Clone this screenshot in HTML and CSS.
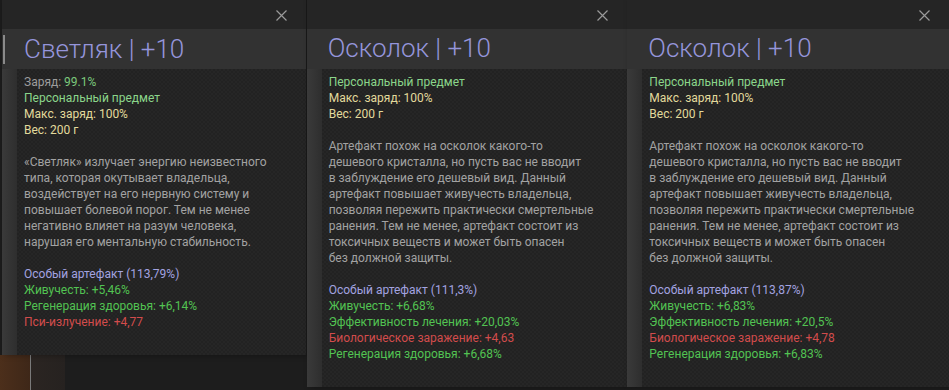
FILE: index.html
```html
<!DOCTYPE html>
<html lang="ru">
<head>
    <meta charset="UTF-8">
    <title>Артефакты</title>
    <link rel="stylesheet" href="styles.css">
</head>
<body>
    <div class="screen">
        <!-- Светляк -->
        <div class="tip tip-short">
            <div class="tip-top">
                <svg class="close" width="11" height="11" viewBox="0 0 11 11"><path d="M0.5 0.5L10.5 10.5M10.5 0.5L0.5 10.5"/></svg>
            </div>
            <div class="tip-title active"><span>Светляк | +10</span></div>
            <div class="tip-body">
                <div class="block">
                    <div><span class="muted">Заряд:</span> <span class="charge">99.1%</span></div>
                    <div class="personal">Персональный предмет</div>
                    <div class="prop">Макс. заряд: 100%</div>
                    <div class="prop">Вес: 200 г</div>
                </div>
                <div class="block desc">
                    «Светляк» излучает энергию неизвестного<br>
                    типа, которая окутывает владельца,<br>
                    воздействует на его нервную систему и<br>
                    повышает болевой порог. Тем не менее<br>
                    негативно влияет на разум человека,<br>
                    нарушая его ментальную стабильность.
                </div>
                <div class="block">
                    <div class="special">Особый артефакт (113,79%)</div>
                    <div class="good">Живучесть: +5,46%</div>
                    <div class="good">Регенерация здоровья: +6,14%</div>
                    <div class="bad">Пси-излучение: +4,77</div>
                </div>
            </div>
        </div>

        <!-- Осколок -->
        <div class="tip">
            <div class="tip-top">
                <svg class="close" width="11" height="11" viewBox="0 0 11 11"><path d="M0.5 0.5L10.5 10.5M10.5 0.5L0.5 10.5"/></svg>
            </div>
            <div class="tip-title"><span>Осколок | +10</span></div>
            <div class="tip-body">
                <div class="block">
                    <div class="personal">Персональный предмет</div>
                    <div class="prop">Макс. заряд: 100%</div>
                    <div class="prop">Вес: 200 г</div>
                </div>
                <div class="block desc">
                    Артефакт похож на осколок какого-то<br>
                    дешевого кристалла, но пусть вас не вводит<br>
                    в заблуждение его дешевый вид. Данный<br>
                    артефакт повышает живучесть владельца,<br>
                    позволяя пережить практически смертельные<br>
                    ранения. Тем не менее, артефакт состоит из<br>
                    токсичных веществ и может быть опасен<br>
                    без должной защиты.
                </div>
                <div class="block">
                    <div class="special">Особый артефакт (111,3%)</div>
                    <div class="good">Живучесть: +6,68%</div>
                    <div class="good">Эффективность лечения: +20,03%</div>
                    <div class="bad">Биологическое заражение: +4,63</div>
                    <div class="good">Регенерация здоровья: +6,68%</div>
                </div>
            </div>
        </div>

        <!-- Осколок, второй -->
        <div class="tip">
            <div class="tip-top">
                <svg class="close" width="11" height="11" viewBox="0 0 11 11"><path d="M0.5 0.5L10.5 10.5M10.5 0.5L0.5 10.5"/></svg>
            </div>
            <div class="tip-title"><span>Осколок | +10</span></div>
            <div class="tip-body">
                <div class="block">
                    <div class="personal">Персональный предмет</div>
                    <div class="prop">Макс. заряд: 100%</div>
                    <div class="prop">Вес: 200 г</div>
                </div>
                <div class="block desc">
                    Артефакт похож на осколок какого-то<br>
                    дешевого кристалла, но пусть вас не вводит<br>
                    в заблуждение его дешевый вид. Данный<br>
                    артефакт повышает живучесть владельца,<br>
                    позволяя пережить практически смертельные<br>
                    ранения. Тем не менее, артефакт состоит из<br>
                    токсичных веществ и может быть опасен<br>
                    без должной защиты.
                </div>
                <div class="block">
                    <div class="special">Особый артефакт (113,87%)</div>
                    <div class="good">Живучесть: +6,83%</div>
                    <div class="good">Эффективность лечения: +20,5%</div>
                    <div class="bad">Биологическое заражение: +4,78</div>
                    <div class="good">Регенерация здоровья: +6,83%</div>
                </div>
            </div>
        </div>
    </div>
</body>
</html>
```

FILE: styles.css
```css
html, body {
    margin: 0;
    height: 100%;
}
body {
    font-family: Roboto, "Liberation Sans", Arial, sans-serif;
    font-size: 12px;
    line-height: 16px;
    color: #a0a0a0;
    background:
        linear-gradient(to right, #4c2f1b 0, #3e2718 30px, #7a7a7a 30px, #7a7a7a 31px, #2b2522 31px, #262220 65px, #1d1d1d 65px) left bottom / 100% 35px no-repeat,
        #1c1c1c;
    overflow: hidden;
}
.screen {
    display: flex;
    align-items: flex-start;
    padding-left: 2px;
}
.tip {
    width: 321px;
    background: linear-gradient(to right, #3a3a3a, #2e2e2e 15px);
    box-shadow: 1px 0 0 #191919, 3px 0 6px rgba(0, 0, 0, 0.35);
}
.tip + .tip {
    margin-left: 1px;
}
.tip:last-child {
    margin-left: 0;
    width: 322px;
}
.tip-short {
    width: 304px;
}
.tip-top {
    height: 29px;
    background: #252525;
    display: flex;
    align-items: center;
    justify-content: flex-end;
    padding-right: 19px;
}
.close {
    stroke: #9a9a9a;
    stroke-width: 1.2;
    margin-top: 2px;
}
.tip-title {
    height: 40px;
    background: #323232;
    display: flex;
    align-items: center;
    padding-left: 21px;
    font-size: 26px;
    font-weight: 300;
    color: #9595db;
    white-space: nowrap;
}
.tip-title span {
    margin-top: -2px;
}
.tip-title.active {
    padding-left: 1px;
}
.tip-title.active span {
    border-left: 2px solid #8a8a8a;
    padding: 4px 0 5px 19px;
    line-height: 20px;
    margin-top: 0;
}
.tip-body {
    margin-left: 15px;
    padding: 5px 0 25px 7px;
    background:
        repeating-conic-gradient(#262626 0 25%, #222222 0 50%) 0 0 / 4px 4px;
    white-space: nowrap;
}
.block + .block {
    margin-top: 16px;
}
.muted {
    color: #9d9d9d;
}
.charge {
    color: #7cc97c;
}
.personal {
    color: #8bd68b;
}
.prop {
    color: #e2da9c;
}
.desc {
    color: #a2a2a2;
}
.special {
    color: #a3a3e0;
}
.good {
    color: #52c352;
}
.bad {
    color: #d24c4c;
}
```
